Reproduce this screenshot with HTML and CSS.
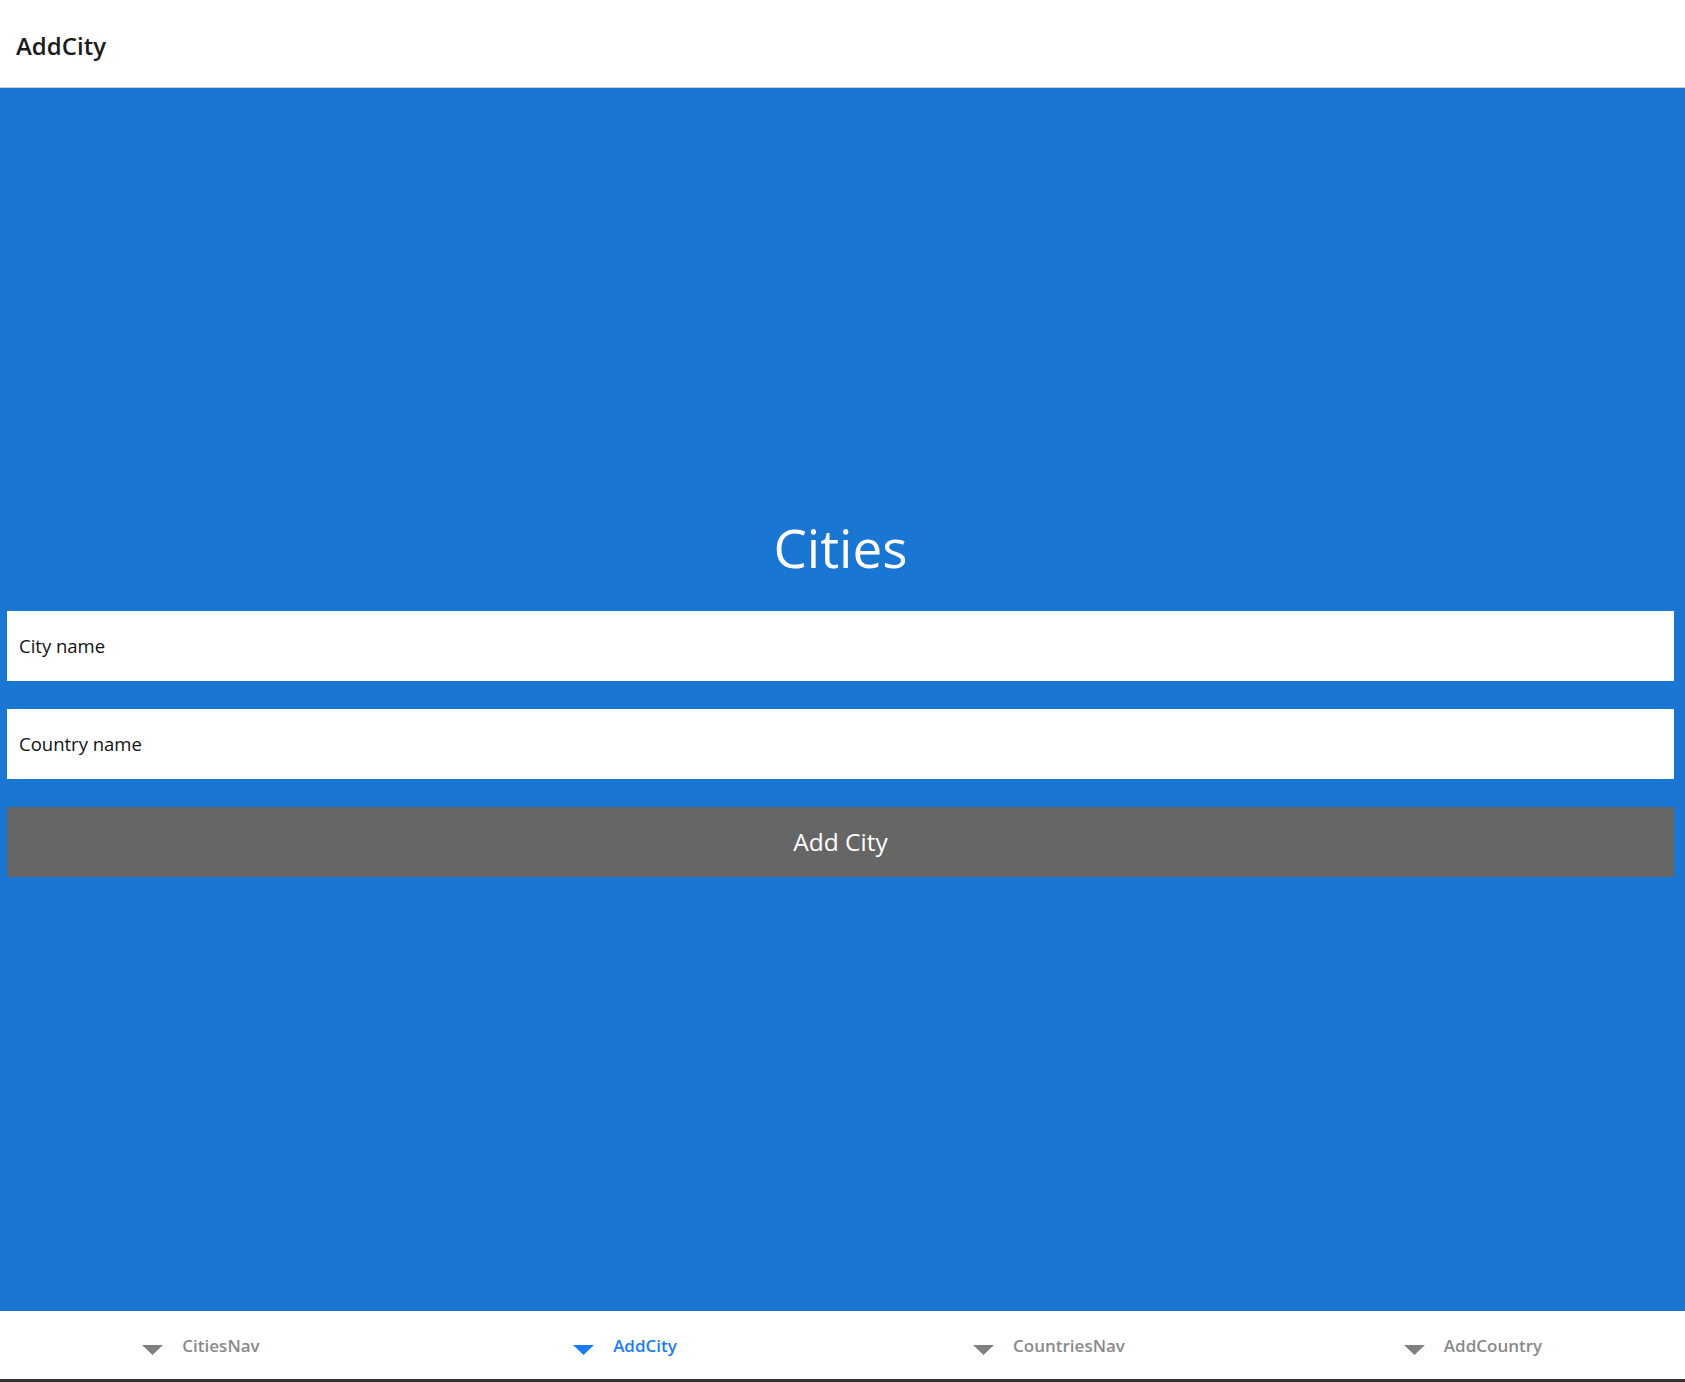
FILE: index.html
```html
<!DOCTYPE html>
<html lang="en">
<head>
<meta charset="utf-8">
<title>AddCity</title>
<link rel="stylesheet" href="styles.css">
</head>
<body>
<div class="app">
  <header class="topbar">
    <h1 class="topbar-title">AddCity</h1>
  </header>
  <main class="content">
    <div class="form">
      <h2 class="heading">Cities</h2>
      <div class="field">City name</div>
      <div class="field">Country name</div>
      <button class="btn">Add City</button>
    </div>
  </main>
  <nav class="tabbar">
    <div class="tab"><svg class="tab-icon" viewBox="0 0 21 10"><polygon points="0,0 21,0 10.5,10"/></svg><span>CitiesNav</span></div>
    <div class="tab active"><svg class="tab-icon" viewBox="0 0 21 10"><polygon points="0,0 21,0 10.5,10"/></svg><span>AddCity</span></div>
    <div class="tab"><svg class="tab-icon" viewBox="0 0 21 10"><polygon points="0,0 21,0 10.5,10"/></svg><span>CountriesNav</span></div>
    <div class="tab"><svg class="tab-icon" viewBox="0 0 21 10"><polygon points="0,0 21,0 10.5,10"/></svg><span>AddCountry</span></div>
  </nav>
</div>
</body>
</html>
```
FILE: styles.css
```css
* { box-sizing: border-box; }
html, body { margin: 0; padding: 0; height: 100%; }
body {
  font-family: "Open Sans", "Noto Sans", sans-serif;
  background: #ffffff;
  overflow: hidden;
}
.app {
  height: 1382px;
  display: flex;
  flex-direction: column;
}
.topbar {
  height: 88px;
  flex: 0 0 88px;
  background: #ffffff;
  border-bottom: 1px solid #cfcfcf;
  display: flex;
  align-items: center;
  padding: 3px 0 0 16px;
}
.topbar-title {
  margin: 0;
  font-size: 24px;
  font-weight: 600;
  color: #1b1b1b;
}
.content {
  flex: 1;
  background: #1976d2;
  display: flex;
  flex-direction: column;
  justify-content: center;
  padding: 0 11px 11px 7px;
}
.form {
  display: flex;
  flex-direction: column;
  gap: 28px;
}
.heading {
  margin: 0 0 -1px;
  text-align: center;
  color: #ffffff;
  font-weight: 400;
  font-size: 53px;
  line-height: 72px;
}
.field {
  height: 70px;
  background: #ffffff;
  display: flex;
  align-items: center;
  padding-left: 12px;
  font-size: 18.5px;
  color: #111111;
}
.btn {
  height: 70px;
  border: none;
  background: #666666;
  color: #ffffff;
  font-family: inherit;
  font-size: 24.5px;
  padding: 0;
}
.tabbar {
  flex: 0 0 71px;
  height: 71px;
  background: #ffffff;
  border-bottom: 3px solid #333333;
  display: grid;
  grid-template-columns: repeat(4, 424px);
  margin-left: -11px;
}
.tab {
  display: flex;
  align-items: center;
  justify-content: center;
  gap: 19px;
  padding-top: 9px;
  color: #8a8a8a;
  font-size: 17px;
  font-weight: 600;
}
.tab span { margin-bottom: 8px; }
.tab-icon {
  width: 21px;
  height: 10px;
  fill: #808080;
}
.tab.active { color: #1a7cf5; }
.tab.active .tab-icon { fill: #1a7cf5; }
```
